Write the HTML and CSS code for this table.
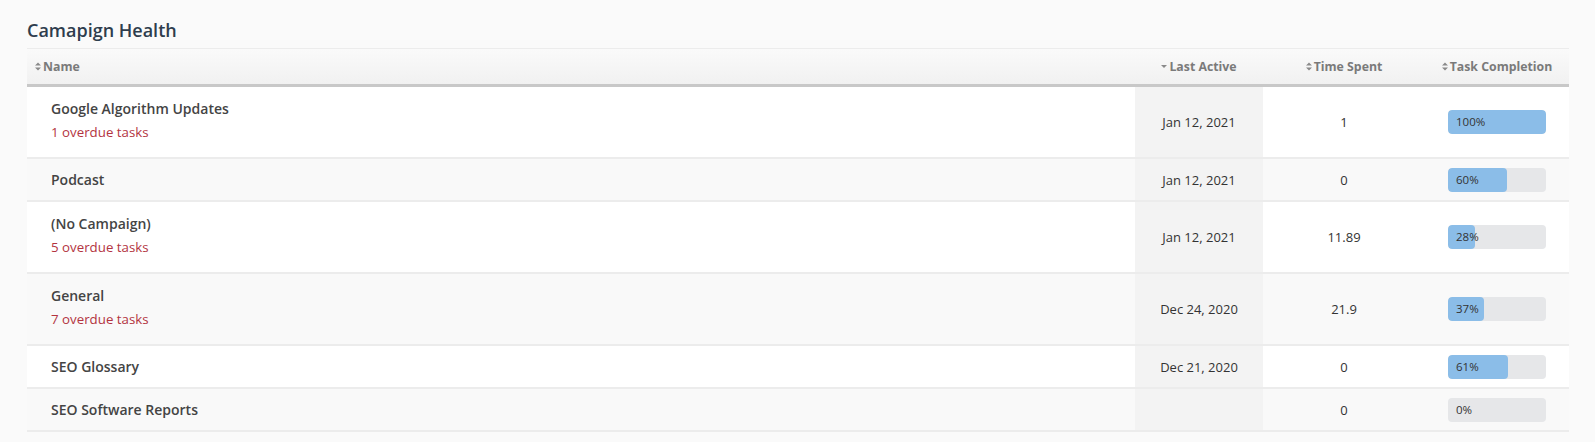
FILE: index.html
```html
<!DOCTYPE html>
<html>
<head>
<meta charset="utf-8">
<link rel="stylesheet" href="styles.css">
</head>
<body>
<div class="panel">
  <h2 class="title">Camapign Health</h2>
  <div class="table">
    <div class="head">
      <div class="hcell name-h"><svg class="sort" viewBox="0 0 6 9" width="6" height="9"><path d="M0 3.5L3 0.5L6 3.5Z M0 5.5L3 8.5L6 5.5Z"/></svg>Name</div>
      <div class="hcell center"><svg class="sort" viewBox="0 0 6 9" width="6" height="9"><path d="M0 3L3 6L6 3Z"/></svg>Last Active</div>
      <div class="hcell center"><svg class="sort" viewBox="0 0 6 9" width="6" height="9"><path d="M0 3.5L3 0.5L6 3.5Z M0 5.5L3 8.5L6 5.5Z"/></svg>Time Spent</div>
      <div class="hcell center"><svg class="sort" viewBox="0 0 6 9" width="6" height="9"><path d="M0 3.5L3 0.5L6 3.5Z M0 5.5L3 8.5L6 5.5Z"/></svg>Task Completion</div>
    </div>

    <div class="row tall">
      <div class="cell name"><div class="nm">Google Algorithm Updates</div><div class="overdue">1 overdue tasks</div></div>
      <div class="cell date">Jan 12, 2021</div>
      <div class="cell num">1</div>
      <div class="cell prog"><div class="bar"><div class="fill" style="width:100%"></div><span class="pct">100%</span></div></div>
    </div>

    <div class="row alt">
      <div class="cell name"><div class="nm">Podcast</div></div>
      <div class="cell date">Jan 12, 2021</div>
      <div class="cell num">0</div>
      <div class="cell prog"><div class="bar"><div class="fill" style="width:60%"></div><span class="pct">60%</span></div></div>
    </div>

    <div class="row tall">
      <div class="cell name"><div class="nm">(No Campaign)</div><div class="overdue">5 overdue tasks</div></div>
      <div class="cell date">Jan 12, 2021</div>
      <div class="cell num">11.89</div>
      <div class="cell prog"><div class="bar"><div class="fill" style="width:28%"></div><span class="pct">28%</span></div></div>
    </div>

    <div class="row tall alt">
      <div class="cell name"><div class="nm">General</div><div class="overdue">7 overdue tasks</div></div>
      <div class="cell date">Dec 24, 2020</div>
      <div class="cell num">21.9</div>
      <div class="cell prog"><div class="bar"><div class="fill" style="width:37%"></div><span class="pct">37%</span></div></div>
    </div>

    <div class="row">
      <div class="cell name"><div class="nm">SEO Glossary</div></div>
      <div class="cell date">Dec 21, 2020</div>
      <div class="cell num">0</div>
      <div class="cell prog"><div class="bar"><div class="fill" style="width:61%"></div><span class="pct">61%</span></div></div>
    </div>

    <div class="row alt">
      <div class="cell name"><div class="nm">SEO Software Reports</div></div>
      <div class="cell date"></div>
      <div class="cell num">0</div>
      <div class="cell prog"><div class="bar"><div class="fill" style="width:0%"></div><span class="pct">0%</span></div></div>
    </div>
  </div>
</div>
</body>
</html>
```

FILE: styles.css
```css
html, body {
  margin: 0;
  padding: 0;
  background: #fafafa;
  font-family: "Open Sans", "Liberation Sans", sans-serif;
  color: #333;
}

.panel {
  padding: 18px 26px 0 27px;
}

.title {
  margin: 0 0 6px 0;
  font-size: 18px;
  line-height: 24px;
  font-weight: 600;
  color: #2e3d4d;
}

.table {
  width: 1542px;
}

.head,
.row {
  display: grid;
  grid-template-columns: 1108px 128px 162px 144px;
}

.head {
  height: 35px;
  border-top: 1px solid #ececec;
  border-bottom: 3px solid #c8c8c8;
  background: linear-gradient(#fafafa, #f1f1f1);
}

.hcell {
  display: flex;
  align-items: center;
  font-size: 12.3px;
  font-weight: 700;
  color: #7a7a7a;
}

.hcell.name-h {
  padding-left: 8px;
}

.hcell.center {
  justify-content: center;
}

.sort {
  fill: #8a8a8a;
  margin-right: 2px;
  flex: none;
}

.row {
  height: 41px;
  background: #fff;
  border-bottom: 2px solid #ececec;
}

.row.tall {
  height: 70px;
}

.row.alt {
  background: #f9f9f9;
}

.cell {
  display: flex;
  align-items: center;
  font-size: 13px;
}

.cell.name {
  flex-direction: column;
  align-items: flex-start;
  justify-content: center;
  padding-left: 24px;
}

.row.tall .cell.name {
  padding-bottom: 4px;
}

.nm {
  font-size: 14px;
  line-height: 20px;
  font-weight: 600;
  color: #444;
}

.overdue {
  font-size: 13.3px;
  line-height: 20px;
  margin-top: 3px;
  color: #b3343f;
}

.cell.date {
  justify-content: center;
  background: #f3f3f3;
}

.cell.num {
  justify-content: center;
}

.cell.prog {
  justify-content: center;
}

.bar {
  position: relative;
  width: 98px;
  height: 24px;
  border-radius: 4px;
  background: #e6e7e9;
  overflow: hidden;
}

.fill {
  height: 100%;
  background: #8bbde8;
  border-radius: 4px;
}

.pct {
  position: absolute;
  left: 8px;
  top: 0;
  line-height: 24px;
  font-size: 11.5px;
  color: #333;
}
```
